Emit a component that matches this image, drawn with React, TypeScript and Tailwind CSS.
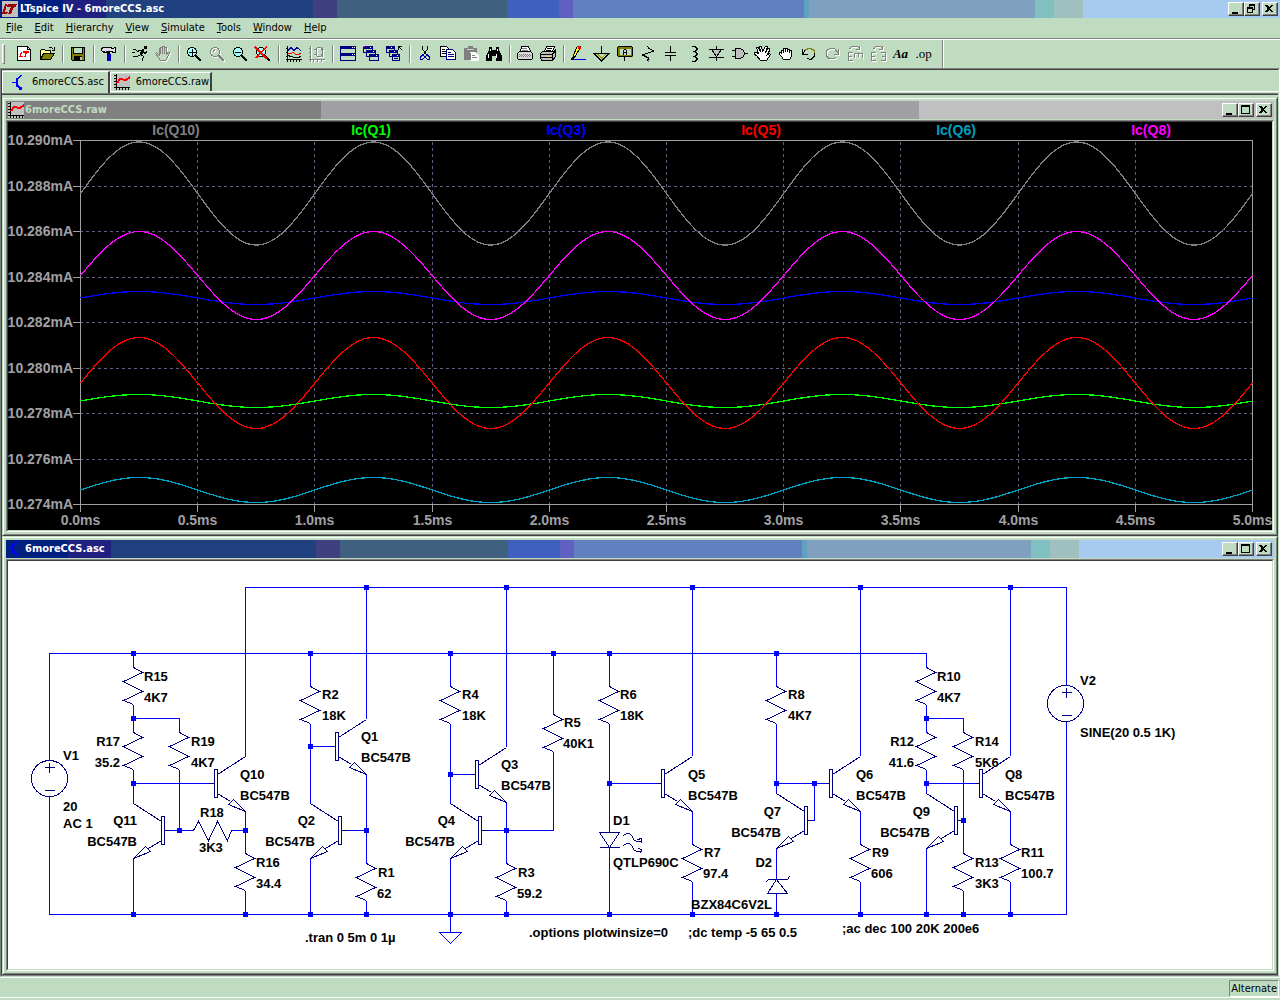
import type { ReactNode } from "react";

const UI_FONT = "font-['DejaVu_Sans_Condensed','DejaVu_Sans',sans-serif]";

const ACTIVE_BAR =
  "bg-[linear-gradient(to_right,#002080_4.92%,#202080_4.92%_8.28%,#204080_8.28%_24.45%,#404080_24.45%_26.33%,#406080_26.33%_39.61%,#4060c0_39.61%_43.67%,#6060c0_43.67%_44.77%,#6080c0_44.77%_62.81%,#60a0c0_62.81%_63.2%,#80a0c0_63.2%_80.86%,#80c0c0_80.86%_82.34%,#a0c0c0_82.34%_84.61%,#a6caf0_84.61%)]";
const INACTIVE_BAR =
  "bg-[linear-gradient(to_right,#808080_24.84%,#a0a0a4_24.84%_72%,#c0c0c0_72%)]";

/* ---------- icons, all on a 16px grid ---------- */

function Glyph({ children }: { children: ReactNode }) {
  return (
    <svg viewBox="0 0 16 16" className="size-4 shrink-0 overflow-visible" fill="none" stroke="#000" shapeRendering="crispEdges" aria-hidden="true">
      {children}
    </svg>
  );
}

// Greyed-out glyph with the white bottom-right relief.
function Etched({ children }: { children: ReactNode }) {
  return (
    <>
      <g className="text-white" stroke="currentColor" transform="translate(1 1)">{children}</g>
      <g className="text-[#808080]" stroke="currentColor">{children}</g>
    </>
  );
}

function Lens({ lens = "#a0ffff" }: { lens?: string }) {
  return (
    <>
      <circle cx="6" cy="6" r="4.5" fill={lens} />
      <path d="M9.5 9.5L15 15" strokeWidth="2" />
    </>
  );
}

const ICONS: Record<string, ReactNode> = {
  new: (
    <>
      <path d="M1.5.5h10l3 3v11h-13z" fill="#fff" />
      <path d="M11.5.5v3h3" />
      <path d="M5.5 6L4 10.500h3M7 6h6M10.500 6L9 10.500H7.500" stroke="#f00" strokeWidth="1.5" />
    </>
  ),
  open: (
    <>
      <path d="M1.5 13.5v-9l1-1h3l1 1h5v3" fill="#ffff80" />
      <path d="M1.5 13.5l3-6h11l-4 6z" fill="#808000" />
      <path d="M9.5 2.5l1-1h2l2 2M15.5 1v3h-3" />
    </>
  ),
  save: (
    <>
      <path d="M1.5 1.5h13v13h-12l-1-1z" fill="#808000" />
      <path d="M4 2h8v6H4z" fill="#c0dcc0" stroke="none" />
      <path d="M3.5 1.5v6h9v-6" />
      <path d="M4 10h8v5H4z" fill="#000" stroke="none" />
      <path d="M10 11h2v3h-2z" fill="#c0c0c0" stroke="none" />
    </>
  ),
  hammer: (
    <>
      <path d="M.5 4.5v-2l2-1h7l2 1 3-1v5h-2l-2-1h-4l-2 1h-2z" fill="#e0e0e0" />
      <path d="M2 5.5h2M10 5.5h2" />
      <path d="M6 6h3v3H6z" fill="#000" stroke="none" />
      <path d="M6 8h4v7H6z" fill="#0000c0" stroke="none" />
    </>
  ),
  run: (
    <>
      <path d="M12 0h3v3h-3z" fill="#000" stroke="none" />
      <path d="M11.5 3.5l-3 5" strokeWidth="2.500" />
      <path d="M11 4.5H7.5l-2 1-2-2M11 5.5l2 2 2-2M8.5 8.5l-3 2H1.5v-1M8.5 8.5l3 2-1 4-1 1M1 3.5h3M0 6.5h3" />
    </>
  ),
  halt: (
    <Etched>
      <path d="M4.5 9.5v-7h1v5-6h2v6-7h2v7-6h2v7l1-2h2l-3 7-1 1h-5l-2-3-3-4 1-1z" fill="#c0dcc0" />
    </Etched>
  ),
  zoomIn: (
    <>
      <Lens />
      <path d="M3 6.500h7M6.500 3v7" />
    </>
  ),
  pan: (
    <Etched>
      <circle cx="6" cy="6" r="4.5" />
      <path d="M4 5.5l2-2M9.5 9.5L15 15" strokeWidth="2" />
    </Etched>
  ),
  zoomOut: (
    <>
      <Lens />
      <path d="M3 6.500h6" />
    </>
  ),
  zoomFit: (
    <>
      <Lens />
      <path d="M0 1l12 12M1 12L12 .5" stroke="#f00" strokeWidth="1.6" />
    </>
  ),
  autorange: (
    <>
      <path d="M1.5 0v15.500M0 13.5h16M0 2.500h2M0 6.500h2M0 10.500h2M4.500 13v3M7.500 13v3M10.500 13v3M13.500 13v3" />
      <path d="M2 4.500l3-3 3 3 3-3 4 3" stroke="#0000a0" />
      <path d="M2 7.500h3l2-1 3 2h2l3-1" stroke="#f00" />
      <path d="M2 9.500l3 1 4 1h3l3-1" />
    </>
  ),
  setLimits: (
    <Etched>
      <path d="M1.500 0v15.500M0 13.500h16M0 2.500h2M0 6.500h2M0 10.500h2M4.500 13v3M8.500 13v3M12.500 13v3M7 3.500c1-3 5-3 6 0M13.500 1v10M15 3.500h-3M7 8.500c1 3 5 3 6 0M7.500 3v6M5 3.500h3M5 8.500h3" />
    </Etched>
  ),
  tile: (
    <>
      <path d="M.5.500h15v14H.500zM.500 7.500h15" stroke="#000080" />
      <path d="M0 0h16v3H0zM0 7h16v3H0z" fill="#000080" stroke="none" />
      <path d="M12 1.500h1M14 1.500h1M12 8.500h1M14 8.500h1" stroke="#fff" />
    </>
  ),
  cascade: (
    <g stroke="#000080" fill="#c0dcc0">
      <path d="M.5.500h9v6h-9zM3.500 4.500h9v6h-9zM6.500 8.500h9v6h-9z" />
      <path d="M0 1.500h10M3 5.500h10M6 9.500h10" strokeWidth="3" />
      <path d="M0 .5h2" stroke="#f0f" />
      <path d="M7 1.500h1M10 5.500h1M13 9.500h1" stroke="#fff" />
    </g>
  ),
  closeAll: (
    <g stroke="#000080" fill="#c0dcc0">
      <path d="M.5.500h8v6h-8zM3.500 4.500h8v6h-8zM6.500 8.500h7v6h-7z" />
      <path d="M0 1.500h9M3 5.500h9M6 9.500h8" strokeWidth="3" />
      <path d="M8 12.500h4" strokeWidth="1" />
      <path d="M5 1.500h1M8 5.500h1M11 9.500h1" stroke="#fff" />
      <path d="M12.500 4V.500H16M12.500.500l4 4" stroke="#000" fill="none" />
    </g>
  ),
  cut: (
    <>
      <path d="M5.500 0v3l4 6M10.500 0v3l-4 6" />
      <path d="M6.500 8.500l-2 1-1 2v2h2l2-2zM9.500 8.500l2 1 1 2v2h-2l-2-2z" stroke="#0000a0" />
    </>
  ),
  copy: (
    <>
      <path d="M.5.500h6l3 3v7h-9z" fill="#fff" />
      <path d="M2 3.500h3M2 5.500h4M2 7.500h4" />
      <path d="M6.500 3.500h6l3 3v7h-9z" fill="#fff" stroke="#000080" />
      <path d="M8 6.500h3M8 8.500h6M8 10.500h6" stroke="#000080" />
    </>
  ),
  paste: (
    <>
      <path d="M1 2h4V0h5v2h4v12H1z" fill="#808080" stroke="none" />
      <path d="M4 3.500h7" stroke="#c0dcc0" />
      <path d="M7.500 6.500h5l3 3v5h-8z" fill="#fff" stroke="#fff" />
      <path d="M9 9.500h3M9 11.500h5M7.500 13.500v-7" stroke="#808080" />
    </>
  ),
  find: (
    <>
      <path d="M3 1h3v3h4V1h3v3l3 6v5h-6v-5H6v5H0v-5l3-6z" fill="#000" stroke="none" />
      <path d="M4.500 3v2M2.500 8v4M11.500 3v2M10.500 8v4" stroke="#fff" />
    </>
  ),
  printSetup: (
    <>
      <path d="M3.500 5.500l1-5h7l2 5" fill="#fff" />
      <path d="M.5 7.500l2-2h11l2 2v5l-1 1h-13l-1-1z" fill="#d8d8d8" />
      <path d="M5 2.500h5M5 4.500h6" stroke="#808080" />
      <path d="M2 8.500h12M3 9.500h11M2 10.500h12" stroke="#808080" strokeDasharray="1 1" />
    </>
  ),
  print: (
    <>
      <path d="M4.500 5.500l2-5h8l-2 5" fill="#fff" />
      <path d="M7 2.500h5M6 4.500h5" />
      <path d="M.5 7.500l2-2h11l2-2v7l-3 4h-11l-1-3z" fill="#c0c0c0" />
      <path d="M1 8.500h11l3-3M1 11.500h11M12.500 8v6" />
      <path d="M7 10.500h3" stroke="#ff0" />
    </>
  ),
  wire: (
    <>
      <path d="M1.500 13l1-4 4-9h2l1 1-5 9z" fill="#ff0" />
      <path d="M6.500 0h2l1 2h-2z" fill="#f00" stroke="#f00" />
      <path d="M0 14h3v-3H1z" fill="#000" stroke="none" />
      <path d="M2 13.500h13" stroke="#00f" />
    </>
  ),
  ground: (
    <>
      <path d="M3 7.500h9l-4 5z" fill="#c0dcc0" stroke="#a0a000" />
      <path d="M7.500 0v7M0 7.500h15L7.500 15z" />
    </>
  ),
  label: (
    <>
      <path d="M1.500 1.500h13v8h-13z" stroke="#808000" strokeWidth="2" />
      <path d="M1.500.500h13l1 1v8l-1 1h-13l-1-1v-8z" />
      <path d="M6.500 9V4.500l1-1h1l1 1V9M6 6.500h4M7.500 10.500V15" />
    </>
  ),
  resistor: (
    <>
      <path d="M3 8.500l5 3 1 2-1 2" stroke="#808080" />
      <path d="M7.500 0l1 2 5 3-11 4 6 3-1 3" />
    </>
  ),
  capacitor: <path d="M7.500 0v6M2 6.500h11M2 9.500h11M7.500 10v5" strokeWidth="1.500" />,
  inductor: <path d="M6 .5h3l2 2v1l-2 2H7M9 5.500l2 2v1l-2 2H7M9 10.500l2 2v1l-2 2H6" />,
  diode: (
    <>
      <path d="M2.500 3.500h10l-5 7z" fill="#c0c0c0" />
      <path d="M7.500 0v3M0 3.500h15M0 11.500h15M7.500 11v4" />
    </>
  ),
  gate: (
    <>
      <path d="M3.500 2.500h5l3 2 1 3-1 3-3 2h-5z" fill="#c0c0c0" />
      <path d="M0 4.500h3M0 10.500h3M12 7.500h4" />
    </>
  ),
  move: (
    <path d="M3.500 7.500l-2-6h2l2 4-1-5h2l1 5 3-5h2l-2 6 2-4h2v2l-2 4 2-1 1 1-4 6h-6l-4-5-2-1v-2h2z" fill="#fff" />
  ),
  drag: (
    <path d="M3.500 7.500v-3h2v-2h2v1-1h2v1h2v1h2v6l-2 3h-6l-2-3-2-2v-2h2zM5.500 5v2M7.500 4v2M9.500 4v2M11.500 5v2" fill="#fff" />
  ),
  undo: (
    <>
      <path d="M1.500 3v5h5M2 7.500l2-3M13.500 5v5l-3 3H8l-2-1" />
      <path d="M4 4.500l3-2h3l3 2 1 2" stroke="#808000" strokeWidth="1.500" />
    </>
  ),
  redo: (
    <Etched>
      <path d="M14.500 3v5h-5M14 7l-3-4-3-1H6L2 5.500v4l3 3h5l2-1" />
    </Etched>
  ),
  rotate: (
    <Etched>
      <path d="M2.500 3l2-2.500h6l2 2M12.500 0v3.500h-4" />
      <path d="M1.500 6v9M1 6.500h5M1 10.500h4M1 14.500h5M7 7.500h9M7.500 8v4M11.500 8v3M15.500 8v4" strokeWidth="1.600" />
    </Etched>
  ),
  mirror: (
    <Etched>
      <path d="M3.500 3l2-2.500h5l2 2M12.500 0v3.500h-4" />
      <path d="M1.500 6v9M1 6.500h5M1 10.500h4M1 14.500h5M15.500 6v9M11 6.500h5M12 10.500h4M11 14.500h5" strokeWidth="1.600" />
    </Etched>
  ),
};

const TOOLBAR: [string, string][][] = [
  [["new", "New Schematic"], ["open", "Open"]],
  [["save", "Save"]],
  [["hammer", "Control Panel"]],
  [["run", "Run"], ["halt", "Halt"]],
  [["zoomIn", "Zoom In"], ["pan", "Pan"], ["zoomOut", "Zoom Out"], ["zoomFit", "Zoom Full Extents"]],
  [["autorange", "Autorange"], ["setLimits", "Set Limits"]],
  [["tile", "Tile Windows"], ["cascade", "Cascade Windows"], ["closeAll", "Close All Windows"]],
  [["cut", "Cut"], ["copy", "Copy"], ["paste", "Paste"], ["find", "Find"]],
  [["printSetup", "Print Setup"], ["print", "Print"]],
  [
    ["wire", "Wire"],
    ["ground", "Ground"],
    ["label", "Label Net"],
    ["resistor", "Resistor"],
    ["capacitor", "Capacitor"],
    ["inductor", "Inductor"],
    ["diode", "Diode"],
    ["gate", "Component"],
    ["move", "Move"],
    ["drag", "Drag"],
    ["undo", "Undo"],
    ["redo", "Redo"],
    ["rotate", "Rotate"],
    ["mirror", "Mirror"],
  ],
];

const MENU = ["File", "Edit", "Hierarchy", "View", "Simulate", "Tools", "Window", "Help"];

function LtLogo() {
  return (
    <Glyph>
      <path d="M0 0h16v16H0z" fill="#c0c0c0" stroke="none" />
      <path d="M3 3h2L3 11h3l-1 2H0zM6 3h9l-1 3h-2l-3 7H6l3-7H5z" fill="#a00000" stroke="none" />
    </Glyph>
  );
}

function SchematicIcon() {
  return (
    <Glyph>
      <path d="M0 7.500h4M5 3v9M5 5l4-5M5 10l5 5" stroke="#00f" strokeWidth="1.500" />
      <path d="M10 11v4H6z" fill="#00f" stroke="none" />
    </Glyph>
  );
}

function WaveIcon() {
  return (
    <Glyph>
      <path d="M0 0h16v16H0z" fill="#c0c0c0" stroke="none" />
      <path d="M2.500 0v16M0 13.500h16M0 1.500h2M0 4.500h2M0 7.500h2M0 10.500h2M5.500 13v3M8.500 13v3M11.500 13v3M14.500 13v3" />
      <path d="M3 9l3-4 2 0 2 1 2 0 4-3" stroke="#f00" strokeWidth="2" />
    </Glyph>
  );
}

/* ---------- window chrome ---------- */

const CAPTION_GLYPHS: Record<string, string> = {
  Minimize: "M3 9h6v2H3z",
  Maximize: "M2 1h9v9H2zM3 3v6h7V3z",
  Restore: "M4 1h6v6H8v3H2V4h2zM5 3v1h3v2h1V3zM3 6v3h4V6z",
  Close: "M2 2h2l2 2 2-2h2L7.500 5.500 10 9H8L6 7 4 9H2l2.500-3.500z",
};

function CaptionButton({ name }: { name: string }) {
  return (
    <button
      type="button"
      aria-label={name}
      className="flex h-[14px] w-4 items-start justify-start border border-t-white border-r-[#404040] border-b-[#404040] border-l-white bg-[#c0dcc0] shadow-[inset_-1px_-1px_0_#808080]"
    >
      <svg viewBox="0 0 13 12" className="h-3 w-[13px]" fillRule="evenodd" shapeRendering="crispEdges">
        <path d={CAPTION_GLYPHS[name]} />
      </svg>
    </button>
  );
}

function CaptionButtons({ middle }: { middle: string }) {
  return (
    <div className="ml-auto flex pr-[2px]">
      <CaptionButton name="Minimize" />
      <CaptionButton name={middle} />
      <span className="w-[2px]" />
      <CaptionButton name="Close" />
    </div>
  );
}

function ChildWindow({ title, icon, active, children }: { title: string; icon: ReactNode; active?: boolean; children: ReactNode }) {
  return (
    <section className="border border-t-[#c0dcc0] border-r-[#404040] border-b-[#404040] border-l-[#c0dcc0]">
      <div className="border border-t-white border-r-[#808080] border-b-[#808080] border-l-white p-[2px]">
        <header className={`mb-px flex h-[18px] items-center ${active ? ACTIVE_BAR : INACTIVE_BAR}`}>
          <span className="flex w-[19px] justify-center">{icon}</span>
          <h2 className={`text-[11px] leading-4 font-bold ${active ? "text-white" : "text-[#c0dcc0]"}`}>{title}</h2>
          <CaptionButtons middle="Maximize" />
        </header>
        <div className="border border-t-[#808080] border-r-white border-b-white border-l-[#808080]">
          <div className="border border-t-[#404040] border-r-[#c0dcc0] border-b-[#c0dcc0] border-l-[#404040]">{children}</div>
        </div>
      </div>
    </section>
  );
}

/* ---------- waveform plot ---------- */

const PLOT = { left: 80, right: 1252, top: 140, bottom: 504 };

const TRACES = [
  { name: "Ic(Q10)", color: "#808080", mid: 193.5, amp: 51.5 },
  { name: "Ic(Q1)", color: "#00ff00", mid: 401, amp: 6.5 },
  { name: "Ic(Q3)", color: "#0000ff", mid: 298, amp: 6.5 },
  { name: "Ic(Q5)", color: "#ff0000", mid: 383, amp: 45.5 },
  { name: "Ic(Q6)", color: "#00a0c0", mid: 490, amp: 12.5 },
  { name: "Ic(Q8)", color: "#ff00ff", mid: 275.5, amp: 44 },
];

function sinePath(mid: number, amp: number) {
  const period = (PLOT.right - PLOT.left) / 5;
  let d = "";
  for (let x = PLOT.left; x <= PLOT.right; x += 2) {
    const y = mid - amp * Math.sin(((x - PLOT.left) / period) * 2 * Math.PI);
    d += `${d ? "L" : "M"}${x + 0.5} ${y.toFixed(2)}`;
  }
  return d;
}

function WavePlot() {
  const rows = Array.from({ length: 9 }, (_, i) => ({
    y: Math.round(PLOT.top + i * 45.5) + 0.5,
    label: `${(10.29 - i * 0.002).toFixed(3)}mA`,
  }));
  const cols = Array.from({ length: 11 }, (_, i) => ({
    x: Math.round(PLOT.left + i * 117.2) + 0.5,
    label: `${(i * 0.5).toFixed(1)}ms`,
  }));
  return (
    <svg
      viewBox="8 122 1264 408"
      className="block w-full bg-black font-['Liberation_Sans',Arial,sans-serif] text-[14px] font-bold"
      fill="none"
      shapeRendering="crispEdges"
      role="img"
      aria-label="Collector currents"
    >
      {rows.map((r, i) => (
        <g key={r.label}>
          {i > 0 && i < 8 && <path d={`M80 ${r.y}H1252`} stroke="#606080" strokeDasharray="3 3" />}
          <path d={`M73 ${r.y}H80`} stroke="#a0a0a4" />
          <text x="73" y={r.y + 4.5} textAnchor="end" fill="#a0a0a4">{r.label}</text>
        </g>
      ))}
      {cols.map((c, i) => (
        <g key={c.label}>
          {i > 0 && i < 10 && <path d={`M${c.x} 142V504`} stroke="#606080" strokeDasharray="3 3" />}
          <path d={`M${c.x} 504V512`} stroke="#a0a0a4" />
          <text x={c.x} y="525" textAnchor="middle" fill="#a0a0a4">{c.label}</text>
        </g>
      ))}
      <path d="M80.5 140.500H1252.500V504.500H80.500z" stroke="#a0a0a4" />
      {TRACES.map((t, i) => (
        <g key={t.name}>
          <path d={sinePath(t.mid, t.amp)} stroke={t.color} strokeWidth="1.3" />
          <text x={176 + i * 195} y="135" textAnchor="middle" fill={t.color}>{t.name}</text>
        </g>
      ))}
    </svg>
  );
}

/* ---------- schematic ---------- */

const WIRES = [
  "M49 914V796M49 760V653H926V667M245 756V587H1066V685M1066 721V914H49",
  "M133 653V667M133 704V732M133 718H179V732M179 769V830M133 769V802M133 783H208M133 858V914",
  "M170 830H193M231 830H245M245 811V853M245 890V914",
  "M310 653V686M310 723V802M310 746H330M310 858V914M366 587V718M366 774V863M366 900V914M348 830H366",
  "M450 653V686M450 723V802M450 774H470M450 858V932M506 587V746M506 802V863M506 900V914M488 830H553V751M553 653V714",
  "M609 653V686M609 723V832M609 783H656M609 847V914M692 587V755M692 811V844M692 881V914",
  "M776 653V686M776 723V792M776 783H824M814 783V820H811M776 848V879M776 893V914M860 587V755M860 811V844M860 881V914",
  "M926 704V732M926 718H963V732M926 769V792M926 783H974M926 848V914M963 769V853M963 890V914M961 820H963",
  "M1010 587V755M1010 811V844M1010 881V914",
];

const JUNCTIONS: [number, number[]][] = [
  [587, [366, 506, 692, 860, 1010]],
  [653, [133, 310, 450, 553, 609, 776]],
  [718, [133, 926]],
  [746, [310]],
  [774, [450]],
  [783, [133, 609, 776, 814, 926]],
  [820, [963]],
  [830, [179, 245, 366, 506]],
  [914, [133, 245, 310, 366, 450, 506, 609, 692, 776, 860, 926, 963, 1010]],
];

const RESISTORS: [number, number][] = [
  [133, 667], [133, 732], [179, 732], [245, 853],
  [310, 686], [366, 863], [450, 686], [506, 863], [553, 714],
  [609, 686], [692, 844], [776, 686], [860, 844],
  [926, 667], [926, 732], [963, 732], [963, 853], [1010, 844],
];

// x of the emitter, y of the base, direction
const TRANSISTORS: [number, number, 1 | -1][] = [
  [245, 783, 1], [133, 830, -1], [366, 746, 1], [310, 830, -1],
  [506, 774, 1], [450, 830, -1], [692, 783, 1], [860, 783, 1],
  [776, 820, -1], [1010, 783, 1], [926, 820, -1],
];

const LABELS: [number, number, string][] = [
  [144, 681, "R15"], [144, 702, "4K7"], [191, 746, "R19"], [191, 767, "4K7"],
  [63, 760, "V1"], [63, 811, "20"], [63, 828, "AC 1"],
  [240, 779, "Q10"], [240, 800, "BC547B"], [200, 817, "R18"], [199, 852, "3K3"],
  [256, 867, "R16"], [256, 888, "34.4"],
  [322, 699, "R2"], [322, 720, "18K"], [361, 741, "Q1"], [361, 762, "BC547B"],
  [378, 877, "R1"], [377, 898, "62"],
  [462, 699, "R4"], [462, 720, "18K"], [501, 769, "Q3"], [501, 790, "BC547B"],
  [564, 727, "R5"], [563, 748, "40K1"], [518, 877, "R3"], [517, 898, "59.2"],
  [620, 699, "R6"], [620, 720, "18K"], [688, 779, "Q5"], [688, 800, "BC547B"],
  [613, 825, "D1"], [613, 867, "QTLP690C"], [704, 857, "R7"], [703, 878, "97.4"],
  [788, 699, "R8"], [788, 720, "4K7"], [856, 779, "Q6"], [856, 800, "BC547B"],
  [872, 857, "R9"], [871, 878, "606"],
  [937, 681, "R10"], [937, 702, "4K7"], [975, 746, "R14"], [975, 767, "5K6"],
  [1005, 779, "Q8"], [1005, 800, "BC547B"], [975, 867, "R13"], [975, 888, "3K3"],
  [1021, 857, "R11"], [1021, 878, "100.7"], [1080, 685, "V2"], [1080, 737, "SINE(20 0.5 1K)"],
  [305, 942, ".tran 0 5m 0 1µ"], [529, 937, ".options plotwinsize=0"],
  [688, 937, ";dc temp -5 65 0.5"], [842, 933, ";ac dec 100 20K 200e6"],
];

const END_LABELS: [number, number, string][] = [
  [120, 746, "R17"], [120, 767, "35.2"], [137, 825, "Q11"], [137, 846, "BC547B"],
  [315, 825, "Q2"], [315, 846, "BC547B"], [455, 825, "Q4"], [455, 846, "BC547B"],
  [781, 816, "Q7"], [781, 837, "BC547B"], [772, 867, "D2"], [772, 909, "BZX84C6V2L"],
  [914, 746, "R12"], [914, 767, "41.6"], [930, 816, "Q9"], [930, 837, "BC547B"],
];

function Schematic() {
  return (
    <svg
      viewBox="8 561 1264 408"
      className="block w-full bg-white font-['Liberation_Sans',Arial,sans-serif] text-[13px] font-bold"
      fill="none"
      shapeRendering="crispEdges"
      role="img"
      aria-label="Six constant current sources"
    >
      <g transform="translate(.5 .5)">
        <g stroke="#000080">
          {RESISTORS.map(([x, y]) => (
            <path key={`${x}-${y}`} d={`M${x} ${y}l9 5-19 9 19 10-19 9 10 4`} />
          ))}
          <path d="M193 830l5-9 10 19 9-19 10 19 4-10" />
          {TRANSISTORS.map(([x, y, dir]) => (
            <path
              key={`${x}-${y}`}
              transform={`translate(${x} ${y}) scale(${dir} 1)`}
              d="M-31-14h3v28h-3zM-38 0h7M-28-9L0-27M-28 10l13 8M0 28l-12-12-5 5z"
            />
          ))}
          <circle cx="49" cy="778" r="18" />
          <path d="M44 767h10M49 762v10M44 790h10" />
          <circle cx="1065" cy="703" r="18" />
          <path d="M1061 692h10M1066 687v10M1061 715h10" />
          <path d="M599 832h20l-10 15zM599 847h20" />
          <path d="M623 835l3-2h3l3 3 1 3 3 2h5M637 839l4-1v4M623 845l3-2h3l3 3 1 3 3 2h5M638 848l3 1-1 4" />
          <path d="M765 882l3-3h19l2-3M776 879l-9 14h20z" />
        </g>
        <g stroke="#0000ff">
          {WIRES.map((d) => (
            <path key={d} d={d} />
          ))}
          <path d="M439 932h22l-11 11z" />
        </g>
      </g>
      <g fill="#0000ff">
        {JUNCTIONS.map(([y, xs]) => xs.map((x) => <rect key={`${x}-${y}`} x={x - 2} y={y - 2} width="5" height="5" />))}
      </g>
      <g fill="#000">
        {LABELS.map(([x, y, s]) => (
          <text key={`${x}-${y}`} x={x} y={y}>{s}</text>
        ))}
        {END_LABELS.map(([x, y, s]) => (
          <text key={`${x}-${y}`} x={x} y={y} textAnchor="end">{s}</text>
        ))}
      </g>
    </svg>
  );
}

/* ---------- main frame ---------- */

function Toolbar() {
  return (
    <div role="toolbar" aria-label="Main" className="flex h-[28px] items-center">
      <span className="ml-[2px] h-[20px] w-[3px] border border-t-white border-r-[#808080] border-b-[#808080] border-l-white" />
      <div className="ml-[7px] flex">
        {TOOLBAR.map((group, i) => (
          <div key={i} className="flex items-center">
            {i > 0 && <span className="mr-[2px] ml-1 h-[18px] w-[2px] border-r border-l border-r-white border-l-[#808080]" />}
            {group.map(([id, label]) => (
              <button key={id} type="button" aria-label={label} className="flex h-[22px] w-[23px] items-center justify-center">
                <Glyph>{ICONS[id]}</Glyph>
              </button>
            ))}
          </div>
        ))}
        <button type="button" aria-label="Text" className="w-[23px] font-['Liberation_Serif',serif] text-[13px] leading-[22px] font-bold italic">
          Aa
        </button>
        <button type="button" aria-label="SPICE Directive" className="w-[23px] font-['Liberation_Serif',serif] text-[13px] leading-[22px]">
          .op
        </button>
      </div>
      <span className="ml-[7px] h-full w-[2px] border-r border-l border-r-white border-l-[#808080]" />
    </div>
  );
}

export default function App() {
  return (
    <div className={`flex min-h-screen flex-col bg-[#c0dcc0] text-[11px] text-black ${UI_FONT}`}>
      <header className={`flex h-[18px] items-center pl-[2px] ${ACTIVE_BAR}`}>
        <LtLogo />
        <h1 className="pl-[2px] leading-4 font-bold text-white">LTspice IV - 6moreCCS.asc</h1>
        <CaptionButtons middle="Restore" />
      </header>

      <nav className="flex h-[20px] items-center">
        {MENU.map((item) => (
          <button key={item} type="button" className="px-[6px] leading-5">
            <span className="underline underline-offset-1">{item[0]}</span>
            {item.slice(1)}
          </button>
        ))}
      </nav>

      <div className="border-t border-[#808080]">
        <div className="border-t border-white">
          <Toolbar />
        </div>
      </div>

      <main className="border border-t-[#808080] border-r-white border-b-[#c0dcc0] border-l-[#808080]">
        <div className="border border-t-[#404040] border-r-[#c0dcc0] border-b-[#808080] border-l-[#404040]">
          <div role="tablist" className="flex h-[23px] pt-px">
            <button type="button" role="tab" aria-selected="true" className="flex h-[22px] items-center gap-1 border-t border-r-2 border-l border-t-white border-r-[#404040] border-l-white pr-1 pl-[9px]">
              <SchematicIcon />
              6moreCCS.asc
            </button>
            <div className="mb-px flex flex-1 border-b border-white pt-px">
              <button type="button" role="tab" aria-selected="false" className="flex items-center gap-[6px] border-t border-r-2 border-l border-t-white border-r-[#404040] border-l-white pr-px pl-[3px]">
                <WaveIcon />
                6moreCCS.raw
              </button>
            </div>
          </div>
          <div className="border-t border-[#808080]">
            <div className="border-t border-[#404040] pt-[2px]">
              <ChildWindow title="6moreCCS.raw" icon={<WaveIcon />}>
                <WavePlot />
              </ChildWindow>
              <ChildWindow title="6moreCCS.asc" icon={<SchematicIcon />} active>
                <Schematic />
              </ChildWindow>
            </div>
          </div>
        </div>
      </main>

      <footer className="border-t border-white pt-[2px]">
        <div className="flex justify-end border-b border-white">
          <span className="mr-px border border-t-[#808080] border-r-white border-b-white border-l-[#808080] px-px leading-[15px]">
            Alternate
          </span>
        </div>
      </footer>
    </div>
  );
}
